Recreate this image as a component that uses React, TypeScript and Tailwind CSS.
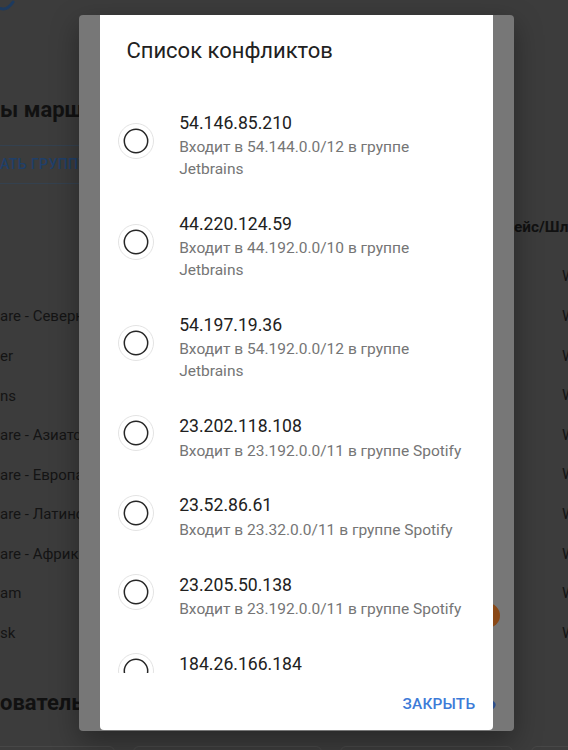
import React from "react";

const items = [
  { ip: "54.146.85.210", sub: "Входит в 54.144.0.0/12 в группе Jetbrains" },
  { ip: "44.220.124.59", sub: "Входит в 44.192.0.0/10 в группе Jetbrains" },
  { ip: "54.197.19.36", sub: "Входит в 54.192.0.0/12 в группе Jetbrains" },
  { ip: "23.202.118.108", sub: "Входит в 23.192.0.0/11 в группе Spotify" },
  { ip: "23.52.86.61", sub: "Входит в 23.32.0.0/11 в группе Spotify" },
  { ip: "23.205.50.138", sub: "Входит в 23.192.0.0/11 в группе Spotify" },
  { ip: "184.26.166.184", sub: "Входит в 184.24.0.0/13 в группе Akamai" },
];

const rows = [
  "",
  "are - Северная Америка",
  "er",
  "ns",
  "are - Азиатско-Тихоокеанский",
  "are - Европа",
  "are - Латинская Америка",
  "are - Африка",
  "am",
  "sk",
];

function Radio() {
  return (
    <svg width="36" height="36" viewBox="0 0 36 36" className="block">
      <circle cx="18" cy="18" r="17.5" fill="none" stroke="#e3e3e3" strokeWidth="1" />
      <circle cx="18" cy="18" r="11.7" fill="none" stroke="#262626" strokeWidth="1.5" />
    </svg>
  );
}

export default function App() {
  return (
    <div className="relative w-[568px] h-[750px] overflow-hidden bg-[#3c3c3c] font-['Roboto',sans-serif]">
      {/* dimmed page */}
      <div className="flex flex-col">
        <div className="h-[88px]">
          <svg width="20" height="12" viewBox="0 0 20 12" className="block">
            <path d="M0 8.5 Q7 11 13 2" fill="none" stroke="#1d3a5e" strokeWidth="3" strokeLinecap="round" />
          </svg>
        </div>
        <div className="h-[44px] leading-[44px] text-[22px] font-bold text-[#111111] whitespace-nowrap">
          ы маршрутов
        </div>
        <div className="mt-[13px] h-[39px] w-[160px] -ml-[12px] border border-[#34414f] rounded-[4px] flex items-center pl-[11px] text-[14px] font-medium tracking-[0.4px] text-[#1f3f69] whitespace-nowrap">
          АТЬ ГРУППУ
        </div>
        <div className="mt-[24px] h-[40px] flex items-center whitespace-nowrap">
          <div className="w-[514px] shrink-0" />
          <div className="text-[15.4px] font-bold text-[#111111]">ейс/Шлюз</div>
        </div>
        <div className="mt-[9.2px] flex flex-col">
          {rows.map((r, i) => (
            <div key={i} className="h-[39.6px] flex items-center whitespace-nowrap">
              <div className="w-[562px] shrink-0 overflow-hidden text-[15px] text-[#141414]">{r}</div>
              <div className="text-[15.4px] text-[#141414]">Wireguard</div>
            </div>
          ))}
        </div>
        <div className="mt-[28px] h-[44px] leading-[44px] text-[22px] font-bold text-[#111111] whitespace-nowrap">
          ователь
        </div>
        <div className="mt-[21px] flex gap-[18px] -ml-[20px]">
          <div className="w-[135px] h-[60px] shrink-0 border border-[#474747] rounded-[6px]" />
          <div className="w-[189px] h-[60px] shrink-0 border border-[#474747] rounded-[6px]" />
          <div className="w-[173px] h-[60px] shrink-0 border border-[#474747] rounded-[6px]" />
          <div className="w-[100px] h-[60px] shrink-0 border border-[#474747] rounded-[6px]" />
        </div>
      </div>

      {/* dimmed panel behind dialog */}
      <div className="absolute left-[79px] top-[15px] w-[435px] h-[716px] rounded-[4px] bg-[#777777] shadow-[0_10px_28px_rgba(0,0,0,0.35)] overflow-hidden">
        <div className="absolute left-[395.5px] top-[587.5px] w-[25px] h-[25px] rounded-full bg-[#8a4816]" />
        <svg width="8" height="10" viewBox="0 0 8 10" className="absolute left-[412px] top-[685px]">
          <path d="M1 1.5 Q6 5 1 8.5" fill="none" stroke="#2c4d8a" strokeWidth="2.4" strokeLinecap="round" />
        </svg>
      </div>

      {/* dialog */}
      <div className="absolute left-[100px] top-[15px] w-[393px] h-[715px] bg-white rounded-b-[4px] flex flex-col">
        <div className="px-[26.4px] py-[17.6px] text-[22px] leading-[35.2px] text-[#212121] whitespace-nowrap">
          Список конфликтов
        </div>
        <div className="flex-1 overflow-hidden pt-[8.8px]">
          {items.map((it) => (
            <div key={it.ip} className="flex items-center px-[17.6px] py-[8.8px]">
              <div className="w-[61.6px] shrink-0 mb-[8px]">
                <Radio />
              </div>
              <div className="my-[6.6px] min-w-0 max-w-[288px] flex-1">
                <div className="text-[17.6px] leading-[26.4px] text-[#212121]">{it.ip}</div>
                <div className="text-[15.5px] leading-[22px] text-[#757575]">{it.sub}</div>
              </div>
            </div>
          ))}
        </div>
        <div className="h-[57.2px] shrink-0 flex items-center justify-end px-[8.8px] pt-[5px]">
          <button className="px-[8.8px] py-[6.6px] text-[15.4px] leading-[26px] font-medium uppercase tracking-[0.2px] text-[#3d7bd8]">
            Закрыть
          </button>
        </div>
      </div>
    </div>
  );
}
